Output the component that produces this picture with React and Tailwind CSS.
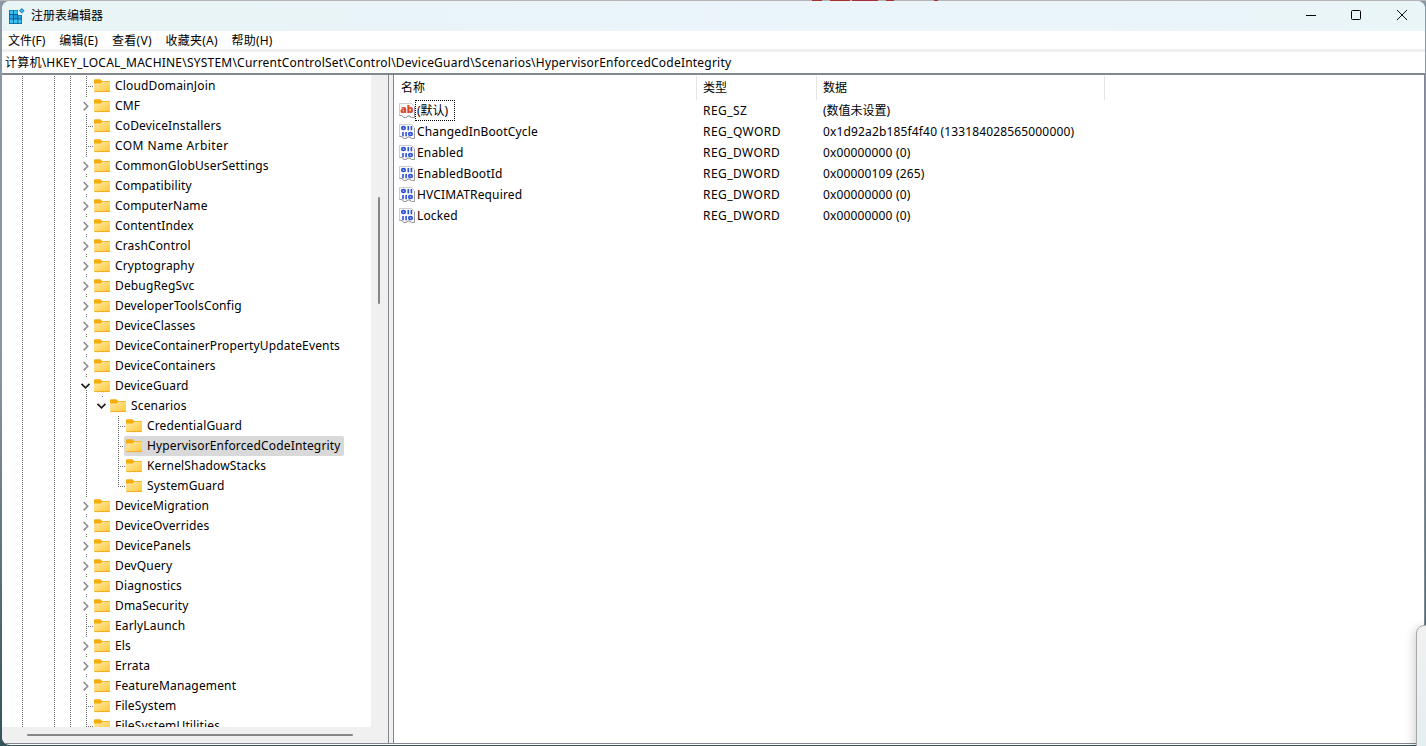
import React from "react";

const LINE = "#6b6b6b";

// one 16px indent cell of the tree: blank, guide line, leaf elbow or expander
function Cell({ kind }) {
  return (
    <svg width="16" height="20" viewBox="0 0 16 20" className="shrink-0" shapeRendering="crispEdges">
      {(kind === "line" || kind === "leaf") && (
        <path d="M8.5 0V20" stroke={LINE} strokeDasharray="1 1" />
      )}
      {kind === "leaf" && <path d="M10 10.5H16" stroke={LINE} strokeDasharray="1 1" />}
      {kind === "end" && <path d="M8.5 0V10M8 10.5H16" stroke={LINE} strokeDasharray="1 1" />}
      {kind === "closed" && (
        <>
          <path d="M8.5 0V1M8.5 18V19" stroke={LINE} />
          <path d="M5.7 6L9.7 10.2L5.7 14.4" fill="none" stroke="#8c8c8c" strokeWidth="1.6" shapeRendering="auto" />
        </>
      )}
      {(kind === "open" || kind === "openLast") && (
        <>
          <path d="M8.5 0V1" stroke={LINE} />
          {kind === "open" && <path d="M8.5 14V20" stroke={LINE} strokeDasharray="1 1" />}
          <path d="M3.5 7.8L7.5 11.8L11.5 7.8" fill="none" stroke="#1f1f1f" strokeWidth="1.7" shapeRendering="auto" />
        </>
      )}
    </svg>
  );
}

function Folder() {
  return (
    <svg width="16" height="20" viewBox="0 0 16 20" className="shrink-0">
      <defs>
        <linearGradient id="folder" x1="0" y1="0" x2="1" y2="1">
          <stop offset="0" stopColor="#ffe9a6" />
          <stop offset="1" stopColor="#ffc938" />
        </linearGradient>
      </defs>
      <path d="M0 4.3Q0 3.2 1 3.2H6.4L8.2 5H15Q16 5 16 6V8H0Z" fill="#f5ae0a" />
      <path d="M0 7.4H6.6L8.4 5.8H15.2Q16 5.8 16 6.6V15Q16 16 15 16H1Q0 16 0 15Z" fill="url(#folder)" />
      <path d="M0.4 15.6H15.6" stroke="#e8a317" strokeWidth="0.8" />
    </svg>
  );
}

const TREE = [
  ["CloudDomainJoin", "leaf"],
  ["CMF", "closed"],
  ["CoDeviceInstallers", "leaf"],
  ["COM Name Arbiter", "leaf"],
  ["CommonGlobUserSettings", "closed"],
  ["Compatibility", "closed"],
  ["ComputerName", "closed"],
  ["ContentIndex", "closed"],
  ["CrashControl", "closed"],
  ["Cryptography", "closed"],
  ["DebugRegSvc", "closed"],
  ["DeveloperToolsConfig", "closed"],
  ["DeviceClasses", "closed"],
  ["DeviceContainerPropertyUpdateEvents", "closed"],
  ["DeviceContainers", "closed"],
  ["DeviceGuard", "open"],
  ["Scenarios", "line", "openLast"],
  ["CredentialGuard", "line", "blank", "leaf"],
  ["HypervisorEnforcedCodeIntegrity", "line", "blank", "leaf"],
  ["KernelShadowStacks", "line", "blank", "leaf"],
  ["SystemGuard", "line", "blank", "end"],
  ["DeviceMigration", "closed"],
  ["DeviceOverrides", "closed"],
  ["DevicePanels", "closed"],
  ["DevQuery", "closed"],
  ["Diagnostics", "closed"],
  ["DmaSecurity", "closed"],
  ["EarlyLaunch", "leaf"],
  ["Els", "closed"],
  ["Errata", "closed"],
  ["FeatureManagement", "closed"],
  ["FileSystem", "leaf"],
  ["FileSystemUtilities", "leaf"],
];

const SELECTED = "HypervisorEnforcedCodeIntegrity";

function TreeRow({ name, cells }) {
  const selected = name === SELECTED;
  return (
    <div className="flex h-5 shrink-0 items-center pl-3">
      <Cell kind="line" />
      <Cell kind="blank" />
      <Cell kind="line" />
      <Cell kind="line" />
      {cells.map((kind, i) => (
        <Cell key={i} kind={kind} />
      ))}
      <div className={`-ml-0.5 flex h-5 items-center rounded-xs pr-1 pl-0.5 ${selected ? "bg-[#d9d9d9]" : ""}`}>
        <Folder />
        <span className={`pl-[5px] leading-5 ${name.includes(" ") ? "tracking-[0.42px]" : ""}`}>{name}</span>
      </div>
    </div>
  );
}

function ValueIcon({ type }) {
  return (
    <svg width="16" height="16" viewBox="0 0 16 16" className="shrink-0">
      <path d="M0.5 12.5V0.5H12.5L15.5 3.5V14.5H12L10 13H8L6.5 14.5H4.5L3 12.5Z" fill="#fafafa" stroke="#cdcdcd" />
      <path d="M0.5 12.5H3L4.5 14.5H7.5L9 13H11L12.5 14.5H15.5V4" fill="none" stroke="#9a9a9a" />
      {type === "string" ? (
        <text x="1.3" y="9.8" fontSize="10.5" fontWeight="800" letterSpacing="0" fill="#d9482b" className="font-['Open_Sans',sans-serif]">
          ab
        </text>
      ) : (
        <g fill="none" stroke="#2b4fd6" strokeWidth="1.6">
          <ellipse cx="4.5" cy="4" rx="1.8" ry="1.4" />
          <path d="M9.3 1.9V6.2M12.4 1.9V6.2M4 7.9V12.2M7.1 7.9V12.2" />
          <ellipse cx="11.5" cy="10" rx="1.8" ry="1.4" />
        </g>
      )}
    </svg>
  );
}

const VALUES = [
  { name: "(默认)", type: "REG_SZ", data: "(数值未设置)" },
  { name: "ChangedInBootCycle", type: "REG_QWORD", data: "0x1d92a2b185f4f40 (133184028565000000)" },
  { name: "Enabled", type: "REG_DWORD", data: "0x00000000 (0)" },
  { name: "EnabledBootId", type: "REG_DWORD", data: "0x00000109 (265)" },
  { name: "HVCIMATRequired", type: "REG_DWORD", data: "0x00000000 (0)" },
  { name: "Locked", type: "REG_DWORD", data: "0x00000000 (0)" },
];

function ValueList() {
  return (
    <div className="flex grow flex-col border-l border-[#828790] bg-white pt-px">
      <div className="flex h-6 shrink-0 leading-[23px] tracking-normal">
        <div className="w-[303px] border-r border-[#e5e5e5] pl-[7px]">名称</div>
        <div className="w-[120px] border-r border-[#e5e5e5] pl-1.5">类型</div>
        <div className="w-[288px] border-r border-[#e5e5e5] pl-1.5">数据</div>
      </div>
      {VALUES.map((v, i) => (
        <div key={v.name} className="flex h-[21px] shrink-0 items-center">
          <div className="flex w-[303px] items-center pl-[5px]">
            <ValueIcon type={v.type === "REG_SZ" ? "string" : "binary"} />
            <span
              className={
                i === 0
                  ? "h-[21px] w-10 border border-dotted border-black pl-px leading-[19px] tracking-normal"
                  : "pl-0.5 leading-[21px]"
              }
            >
              {v.name}
            </span>
          </div>
          <div className="w-[120px] pl-1.5 leading-[21px] tracking-[0.42px]">{v.type}</div>
          <div className={`pl-1.5 leading-[21px] ${i === 0 ? "tracking-normal" : ""}`}>{v.data}</div>
        </div>
      ))}
    </div>
  );
}

function TitleBar() {
  return (
    <div className="flex h-[30px] shrink-0 items-center bg-linear-to-r from-[#e9f4f6] via-[#eaf4fa] to-[#eaf5f8] pl-[7px] text-[12px]">
      <svg width="16" height="16" viewBox="0 0 16 16">
        <path d="M0 2H9V7H13V16H0Z" fill="#0b5c94" />
        <g fill="#3cc3f2">
          <path d="M0.7 2.6H4.2V6H0.7ZM5 2.6H8.5V6H5Z" />
          <path d="M0.7 7H4.2V10.6H0.7Z" fill="#25a5e0" />
          <path d="M5 7H8.5V10.6H5Z" fill="#1d94d6" />
          <path d="M9.3 7.6H12.4V10.6H9.3Z" fill="#25a5e0" />
          <path d="M0.7 11.5H4.2V15.2H0.7ZM5 11.5H8.5V15.2H5ZM9.3 11.5H12.4V15.2H9.3Z" />
        </g>
        <path d="M12.8 0L15.6 2.8L12.8 5.6L10 2.8Z" fill="#1a86b8" />
        <path d="M12.8 1.4L14.2 2.8L12.8 4.2L11.4 2.8Z" fill="#4cc6ee" />
      </svg>
      <span className="-mt-px pl-1.5 tracking-normal">注册表编辑器</span>
      <div className="ml-auto flex">
        <svg width="46" height="30" viewBox="0 0 46 30">
          <path d="M17 14.5H27" stroke="#000" />
        </svg>
        <svg width="46" height="30" viewBox="0 0 46 30">
          <rect x="16.5" y="9.5" width="9" height="9" rx="1" fill="none" stroke="#000" />
        </svg>
        <svg width="44" height="30" viewBox="0 0 44 30">
          <path d="M16 9L26 19M26 9L16 19" stroke="#111" />
        </svg>
      </div>
    </div>
  );
}

export default function App() {
  return (
    <div className="relative flex h-[746px] w-[1426px] flex-col overflow-hidden bg-linear-to-b from-[#8a99a4] via-[#8795a0] to-[#35525c] pt-px pr-px pl-0.5 font-['Noto_Sans','Noto_Sans_CJK_SC',sans-serif] text-[12px] tracking-[0.15px] text-black">
      {/* sliver of the desktop above the window */}
      <div className="absolute top-0 left-0 flex h-px w-full bg-[#b5b5b5] pl-[796px]">
        <div className="mr-2 ml-4 w-2.5 bg-[#a82f2f]" />
        <div className="mr-0.5 w-5 bg-[#a82f2f]" />
        <div className="mr-2 w-[26px] bg-[#a82f2f]" />
        <div className="mr-10 w-2 bg-[#a82f2f]" />
        <div className="w-1 bg-[#a82f2f]" />
      </div>
      <div className="flex h-[744px] flex-col overflow-hidden rounded-lg bg-white">
        <TitleBar />
        <div className="flex h-[18px] shrink-0 items-center gap-[13.8px] pl-1.5 leading-[16px] tracking-normal">
          <span className="pt-0.5">文件(F)</span>
          <span className="pt-0.5 tracking-[0.2px]">编辑(E)</span>
          <span className="pt-0.5 tracking-[0.3px]">查看(V)</span>
          <span className="pt-0.5 tracking-[0.2px]">收藏夹(A)</span>
          <span className="pt-0.5 tracking-[0.2px]">帮助(H)</span>
        </div>
        <div className="h-[3px] shrink-0 bg-[#f0f0f0]" />
        <div className="h-[21px] shrink-0 pl-[3px] leading-[21px] tracking-[0.215px] whitespace-nowrap">
          计算机\HKEY_LOCAL_MACHINE\SYSTEM\CurrentControlSet\Control\DeviceGuard\Scenarios\HypervisorEnforcedCodeIntegrity
        </div>
        <div className="h-0.5 shrink-0 bg-[#828790]" />
        <div className="flex h-[669px] border-r border-b border-[#828790]">
          <div className="flex w-[387px] shrink-0 flex-col border-r border-[#828790] bg-[#f0f0f0]">
            <div className="flex h-[652px]">
              <div className="flex w-[369px] flex-col overflow-hidden rounded-b-xs bg-white pt-px">
                {TREE.map(([name, ...cells]) => (
                  <TreeRow key={name} name={name} cells={cells} />
                ))}
              </div>
              <div className="pt-[122px] pl-[7px]">
                <div className="h-[107px] w-0.5 rounded-full bg-[#868686]" />
              </div>
            </div>
            <div className="pt-[7px] pl-[25px]">
              <div className="h-0.5 w-[326px] rounded-full bg-[#868686]" />
            </div>
          </div>
          <div className="w-1 shrink-0 bg-[#f0f0f0]" />
          <ValueList />
        </div>
      </div>
      {/* corner of another window in front */}
      <div className="absolute top-[625px] left-[1416px] h-[130px] w-5 rounded-tl-lg border border-[#a9a9a9] bg-linear-to-b from-[#f1f1f1] to-[#e4eef2] shadow-[0_4px_12px_rgba(0,0,0,0.25)]" />
    </div>
  );
}
